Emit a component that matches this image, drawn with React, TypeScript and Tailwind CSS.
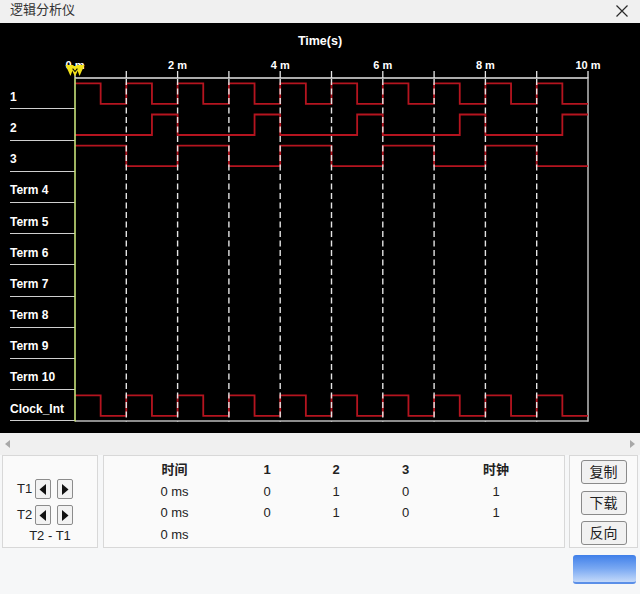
import React from "react";

const X0 = 75;
const PX = 51.3;
const ROW_TOP = 78.3;
const ROW_H = 31.2;
const RED = "#b5141f";
const BOTTOM = ROW_TOP + ROW_H * 11;

type Fn = (t: number) => boolean;

function wavePath(fn: Fn, rowIdx: number) {
  const top = ROW_TOP + rowIdx * ROW_H;
  const hi = top + 5;
  const lo = top + 25.5;
  const y = (b: boolean) => (b ? hi : lo);
  let cur = fn(0.25);
  let d = `M ${X0} ${y(cur)}`;
  for (let i = 0; i < 20; i++) {
    const xe = X0 + (i + 1) * 0.5 * PX;
    d += ` L ${xe} ${y(cur)}`;
    if (i < 19) {
      const nxt = fn((i + 1) * 0.5 + 0.25);
      if (nxt !== cur) {
        d += ` L ${xe} ${y(nxt)}`;
        cur = nxt;
      }
    }
  }
  return d;
}

const s1: Fn = (t) => t % 1 < 0.5;
const s2: Fn = (t) => t % 2 >= 1.5;
const s3: Fn = (t) => Math.floor(t) % 2 === 0;

const labels = ["1", "2", "3", "Term 4", "Term 5", "Term 6", "Term 7", "Term 8", "Term 9", "Term 10", "Clock_Int"];

function Arrow({ dir }: { dir: "l" | "r" }) {
  return (
    <div className="w-[16px] h-[20px] border border-[#8c8c8c] rounded-[2px] bg-[#f2f2f2] flex items-center justify-center">
      <svg width="8" height="11" viewBox="0 0 8 11">
        {dir === "l" ? <polygon points="7,0 7,11 0.5,5.5" fill="#111" /> : <polygon points="1,0 1,11 7.5,5.5" fill="#111" />}
      </svg>
    </div>
  );
}

function Btn({ children }: { children: React.ReactNode }) {
  return (
    <div className="w-[46px] h-[24px] border border-[#8a8a8a] rounded-[3px] bg-[#f1f1f1] flex items-center justify-center text-[14px] text-[#222] leading-none">
      {children}
    </div>
  );
}

export default function App() {
  const ticks = Array.from({ length: 11 }, (_, k) => X0 + k * PX);
  return (
    <div className="w-[640px] h-[594px] bg-[#f6f7f8] flex flex-col overflow-hidden font-['Liberation_Sans','Noto_Sans_CJK_SC',sans-serif]">
      {/* title bar */}
      <div className="h-[23px] bg-[#f0f0f0] flex justify-between items-start">
        <div className="pl-[10px] text-[13px] leading-[19px] text-[#333]">逻辑分析仪</div>
        <svg width="14" height="14" viewBox="0 0 14 14" className="mt-[4px] mr-[11px]">
          <path d="M1.5 1.5 L12.5 12.5 M12.5 1.5 L1.5 12.5" stroke="#2a2a2a" strokeWidth="1.2" />
        </svg>
      </div>

      {/* black chart area */}
      <div className="h-[410px] bg-black flex shrink-0">
        <div className="w-[75px] shrink-0 pl-[10px] pt-[55.3px] flex flex-col text-white font-bold text-[12px]">
          {labels.map((l) => (
            <div key={l} className="h-[31.2px] border-b-[1.5px] border-[#cfcfcf] pt-[10.5px] leading-[16px] whitespace-nowrap">
              {l}
            </div>
          ))}
        </div>
        <svg width="565" height="410" viewBox="75 23 565 410" className="shrink-0 overflow-visible">
          <text x="320" y="44.5" fill="#fff" fontSize="12.5" fontWeight="700" textAnchor="middle">Time(s)</text>
          {ticks.map((x, k) =>
            k % 2 === 0 ? (
              <text key={"l" + k} x={x} y="68.5" fill="#fff" fontSize="11" fontWeight="700" textAnchor="middle">
                {k} m
              </text>
            ) : null
          )}
          {/* axis */}
          <line x1={X0} y1="78" x2="588.5" y2="78" stroke="#e6e6e6" strokeWidth="1.5" />
          {ticks.map((x, k) => (
            <line key={"t" + k} x1={x} y1="71" x2={x} y2="78" stroke="#e6e6e6" strokeWidth="1.3" />
          ))}
          {/* frame */}
          <line x1="588" y1="78" x2="588" y2={BOTTOM} stroke="#bdbdbd" strokeWidth="1.5" />
          <line x1={X0} y1={BOTTOM - 0.5} x2="588.5" y2={BOTTOM - 0.5} stroke="#bdbdbd" strokeWidth="1.5" />
          {/* waves */}
          <g fill="none" stroke={RED} strokeWidth="1.8">
            <path d={wavePath(s1, 0)} />
            <path d={wavePath(s2, 1)} />
            <path d={wavePath(s3, 2)} />
            <path d={wavePath(s1, 10)} />
          </g>
          {/* dashed grid */}
          {ticks.slice(1, 10).map((x, k) => (
            <line key={"d" + k} x1={x} y1="79" x2={x} y2={BOTTOM} stroke="#e4e4e4" strokeWidth="1.4" strokeDasharray="6 3.5" />
          ))}
          {/* green cursor line */}
          <line x1={X0} y1="78" x2={X0} y2={BOTTOM} stroke="#c7e27a" strokeWidth="1.6" />
          {/* cursor markers (T1 / T2) */}
          <polygon points="65.5,65 73.5,65 73.5,67.5 70.5,76" fill="#f2e21a" />
          <polygon points="76.5,65 84.5,65 79.5,76 76.5,67.5" fill="#f2e21a" />
          <polygon points="70,66 80,66 75,76.5" fill="#f2e21a" />
          <path d="M72.6 68.6 L75 71.5 L77.4 68.6" stroke="#000" strokeWidth="1.1" fill="none" />
        </svg>
      </div>

      {/* scroll strip */}
      <div className="h-[22px] bg-[#f0f0f0] flex items-center justify-between px-[5px] shrink-0">
        <svg width="5" height="8" viewBox="0 0 5 8"><polygon points="5,0 5,8 0,4" fill="#a8a8a8" /></svg>
        <svg width="5" height="8" viewBox="0 0 5 8"><polygon points="0,0 0,8 5,4" fill="#a8a8a8" /></svg>
      </div>

      {/* bottom panels */}
      <div className="h-[93px] flex pl-[2px] shrink-0 text-[13px] text-[#222]">
        <div className="w-[96px] border border-[#d8d8d8] bg-[#fafafa] flex flex-col pt-[23px]">
          <div className="flex items-center pl-[14px] h-[20px]">
            <span className="w-[18px]">T1</span>
            <div className="flex gap-[6px]"><Arrow dir="l" /><Arrow dir="r" /></div>
          </div>
          <div className="flex items-center pl-[14px] h-[20px] mt-[6px]">
            <span className="w-[18px]">T2</span>
            <div className="flex gap-[6px]"><Arrow dir="l" /><Arrow dir="r" /></div>
          </div>
          <div className="text-center leading-[16px] mt-[3px]">T2 - T1</div>
        </div>
        <div className="w-[462px] ml-[5px] border border-[#d8d8d8] bg-[#fafafa] pt-[3px]">
          <div className="grid grid-cols-[141px_44px_94px_45px_136px] text-center leading-[21.7px]">
            <div className="font-bold">时间</div>
            <div className="font-bold">1</div>
            <div className="font-bold">2</div>
            <div className="font-bold">3</div>
            <div className="font-bold">时钟</div>
            <div>0 ms</div>
            <div>0</div>
            <div>1</div>
            <div>0</div>
            <div>1</div>
            <div>0 ms</div>
            <div>0</div>
            <div>1</div>
            <div>0</div>
            <div>1</div>
            <div>0 ms</div>
            <div></div>
            <div></div>
            <div></div>
            <div></div>
          </div>
        </div>
        <div className="w-[69px] ml-[4px] border border-[#d8d8d8] bg-[#fafafa] flex flex-col items-center gap-[6.5px] pt-[4px]">
          <Btn>复制</Btn>
          <Btn>下载</Btn>
          <Btn>反向</Btn>
        </div>
      </div>

      {/* bottom area */}
      <div className="flex-1 flex justify-end items-start pt-[7px] pr-[4px]">
        <div className="w-[63px] h-[29px] rounded-[3px] bg-linear-to-b from-[#3f7fe9] via-[#79a8f2] to-[#c4d9f9] border-b-[2px] border-[#5b8fe8]" />
      </div>
    </div>
  );
}
